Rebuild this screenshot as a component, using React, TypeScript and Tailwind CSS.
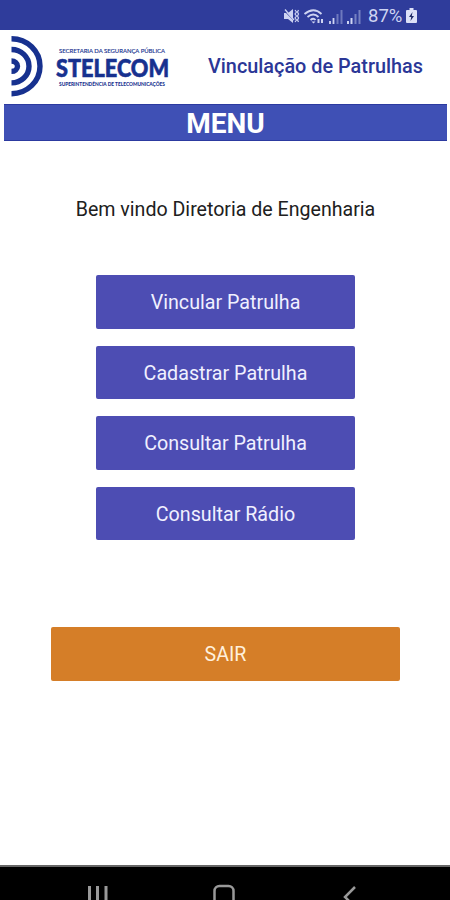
const MENU_ITEMS = ['Vincular Patrulha', 'Cadastrar Patrulha', 'Consultar Patrulha', 'Consultar Rádio'];

function StatusIcons() {
  return (
    <svg width="82" height="20" viewBox="0 0 82 20" fill="none" stroke="#ced4f2">
      <path d="M1 7h4l5-4v14l-5-4H1z" fill="#ced4f2" stroke="none" />
      <path d="M1 4.500l10 10" stroke="#2f3c9b" strokeWidth="1" />
      <path d="M2 3.500l9 10.500" strokeWidth="1.300" />
      <path d="M12 4l1.500 2-1.500 2 1.500 2-1.500 2 1.500 2-1.500 2M15.500 4l-1 2 1 2-1 2 1 2-1 2 1 2" strokeWidth="1.200" />
      <path d="M21.500 8q9-7.500 17 0M24.500 11q6-5 11 0M27.500 14q3-2.500 5 0" strokeWidth="1.800" />
      <path d="M30.500 17.500l-2-2h4z" fill="#ced4f2" stroke="none" />
      <path d="M35.500 17v-4M39 13v4" strokeWidth="2" />
      <path d="M47 15v3M50.500 12v6" strokeWidth="1.800" />
      <path d="M54.500 8v10M58.500 4v14" strokeWidth="2" opacity="0.400" />
      <path d="M65 15v3M68.500 12v6" strokeWidth="2" />
      <path d="M72.500 8v10M76.500 4v14" strokeWidth="2" opacity="0.450" />
    </svg>
  );
}

function BatteryIcon() {
  return (
    <svg width="11" height="16" viewBox="0 0 11 16" className="ml-1">
      <path d="M3.500 0h4v2H10a1 1 0 0 1 1 1v11a1 1 0 0 1-1 1H1a1 1 0 0 1-1-1V3a1 1 0 0 1 1-1h2.500z" fill="#dde1f7" />
      <path d="M6.500 4L3 9h2.200L4.500 13 8 8H5.800z" fill="#202c66" />
    </svg>
  );
}

function StelecomLogo() {
  return (
    <svg width="180" height="72" viewBox="0 0 180 72" className="shrink-0 overflow-visible" fontFamily="Lato, sans-serif" fill="#17318f">
      <g fill="none" stroke="#17318f" strokeWidth="5.400">
        <path d="M11.500 7.700a28.500 27.500 0 0 1 0 55" />
        <path d="M11.500 18.500a17.500 16.700 0 0 1 0 33.400" />
        <path d="M11.500 30a6 5.200 0 0 1 0 10.400" />
      </g>
      <text x="59" y="21.500" fontSize="6.300" stroke="#17318f" strokeWidth="0.150" textLength="106" lengthAdjust="spacingAndGlyphs">SECRETARIA DA SEGURANÇA PÚBLICA</text>
      <text x="56" y="45.500" fontSize="24.500" fontWeight="900" stroke="#17318f" strokeWidth="0.600" textLength="113" lengthAdjust="spacingAndGlyphs">STELECOM</text>
      <text x="59" y="54.500" fontSize="5" fontWeight="900" textLength="106" lengthAdjust="spacingAndGlyphs">SUPERINTENDÊNCIA DE TELECOMUNICAÇÕES</text>
    </svg>
  );
}

export default function App() {
  return (
    <div className="flex h-[900px] w-[450px] flex-col overflow-hidden bg-white font-[Roboto,sans-serif]">
      <div className="flex h-[30px] shrink-0 items-center bg-[#2f3c9b] pl-[283px] pt-0.5 text-[#ced4f2]">
        <StatusIcons />
        <span className="ml-[3px] text-[18.500px] leading-none">87%</span>
        <BatteryIcon />
      </div>

      <header className="flex h-[74px] shrink-0 items-center">
        <StelecomLogo />
        <h1 className="ml-[28px] whitespace-nowrap text-[19.850px] font-medium text-[#2b3797]">Vinculação de Patrulhas</h1>
      </header>

      <div className="ml-1 mr-[3px] flex h-[37px] shrink-0 items-center justify-center border-y border-[#2c3aa0] bg-[#3f50b5] pt-0.5 text-[28px] font-bold text-white">
        MENU
      </div>

      <main className="flex flex-1 flex-col items-center">
        <p className="mt-[55px] pl-px text-[19.600px] leading-[28px] text-[#202020]">Bem vindo Diretoria de Engenharia</p>

        <div className="mt-[51px] flex flex-col gap-[17px]">
          {MENU_ITEMS.map((label) => (
            <button key={label} className="h-[53.500px] w-[259px] rounded-[2px] bg-[#4d4db3] pl-px pt-[3px] text-[19.700px] text-[#f0f0ff]">
              {label}
            </button>
          ))}
        </div>

        <button className="mt-[87px] h-[54px] w-[349px] rounded-[2px] bg-[#d57e28] pl-px pt-[2px] text-[19.600px] text-[#fff0dc]">SAIR</button>
      </main>

      <nav className="h-[35px] shrink-0 border-t-2 border-[#666] bg-black">
        <svg width="450" height="33" viewBox="0 0 450 33" fill="none" stroke="#999" strokeWidth="2.500">
          <path d="M89.500 19v14M97.500 19v14M106 19v14" strokeWidth="3" />
          <rect x="214.500" y="19" width="19" height="19" rx="5" />
          <path d="M355 20l-10 10 10 10" />
        </svg>
      </nav>
    </div>
  );
}
